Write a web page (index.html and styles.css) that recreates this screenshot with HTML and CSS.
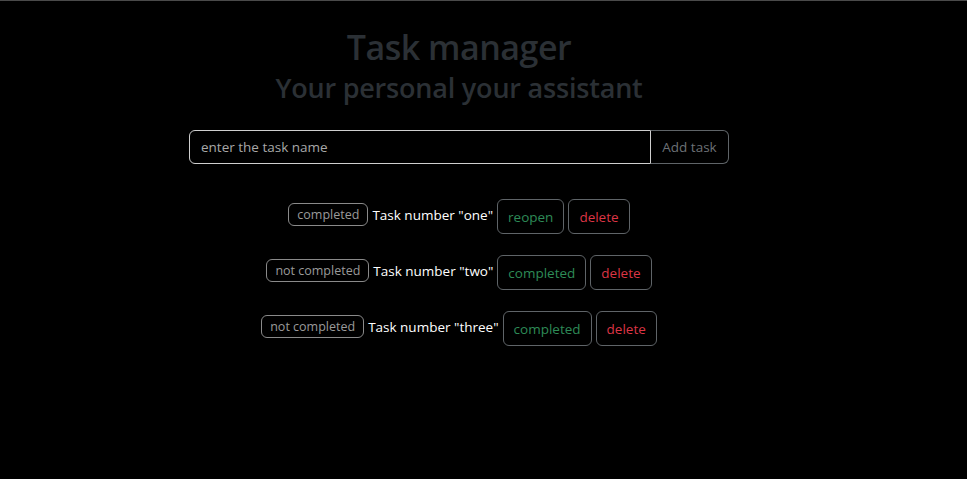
FILE: index.html
```html
<!DOCTYPE html>
<html lang="en">
<head>
<meta charset="utf-8">
<title>Task manager</title>
<link rel="stylesheet" href="styles.css">
</head>
<body>
<main class="app">
  <header class="head">
    <h1 class="title">Task manager</h1>
    <h2 class="subtitle">Your personal your assistant</h2>
  </header>
  <form class="add-form">
    <input class="add-input" type="text" placeholder="enter the task name">
    <button class="add-btn" type="button">Add task</button>
  </form>
  <ul class="tasks">
    <li class="task">
      <span class="badge">completed</span>
      <span class="task-name">Task number "one"</span>
      <button class="btn btn-green" type="button">reopen</button>
      <button class="btn btn-red" type="button">delete</button>
    </li>
    <li class="task">
      <span class="badge">not completed</span>
      <span class="task-name">Task number "two"</span>
      <button class="btn btn-green" type="button">completed</button>
      <button class="btn btn-red" type="button">delete</button>
    </li>
    <li class="task">
      <span class="badge">not completed</span>
      <span class="task-name">Task number "three"</span>
      <button class="btn btn-green" type="button">completed</button>
      <button class="btn btn-red" type="button">delete</button>
    </li>
  </ul>
</main>
</body>
</html>
```

FILE: styles.css
```css
* { box-sizing: border-box; }
html, body { height: 100%; }
body {
  margin: 0;
  background: #000;
  border-top: 1px solid #4a4a4a;
  font-family: "Open Sans", "Noto Sans", sans-serif;
  color: #fff;
}
.app {
  width: 918px;
  display: flex;
  flex-direction: column;
  align-items: center;
}
.head {
  display: flex;
  flex-direction: column;
  align-items: center;
  margin-top: 24px;
}
.title {
  margin: 0;
  font-size: 34px;
  font-weight: 600;
  line-height: 44px;
  color: #2b3035;
  letter-spacing: -0.5px;
}
.subtitle {
  margin: 0;
  font-size: 27px;
  font-weight: 600;
  line-height: 38px;
  color: #2b3035;
  letter-spacing: -0.2px;
}
.add-form {
  display: flex;
  width: 540px;
  margin-top: 23px;
}
.add-input {
  flex: 1;
  height: 34px;
  background: #000;
  border: 1px solid #cfcfcf;
  border-radius: 6px 0 0 6px;
  padding: 0 11px;
  font-family: inherit;
  font-size: 13.5px;
  color: #fff;
  outline: none;
}
.add-input::placeholder { color: #a8a8a8; }
.add-btn {
  height: 34px;
  width: 78px;
  background: #000;
  border: 1px solid #5f6468;
  border-left: none;
  border-radius: 0 6px 6px 0;
  font-family: inherit;
  font-size: 13.5px;
  color: #6c7176;
  padding: 0;
}
.tasks {
  list-style: none;
  margin: 35px 0 0;
  padding: 0;
  display: flex;
  flex-direction: column;
  align-items: center;
  gap: 21px;
}
.task {
  display: flex;
  align-items: center;
  gap: 4px;
}
.badge {
  display: inline-flex;
  align-items: center;
  height: 23px;
  padding: 0 8px;
  border: 1px solid #8a8a8a;
  border-radius: 6px;
  font-size: 12.5px;
  color: #9a9a9a;
  margin-top: -4px;
}
.task-name {
  font-size: 13.5px;
  color: #fff;
  margin-top: -4px;
}
.btn {
  height: 35px;
  padding: 0 10px;
  background: #000;
  border: 1px solid #5f6468;
  border-radius: 6px;
  font-family: inherit;
  font-size: 13.5px;
}
.btn-green { color: #2e8b57; }
.btn-red { color: #dc3545; }
```
